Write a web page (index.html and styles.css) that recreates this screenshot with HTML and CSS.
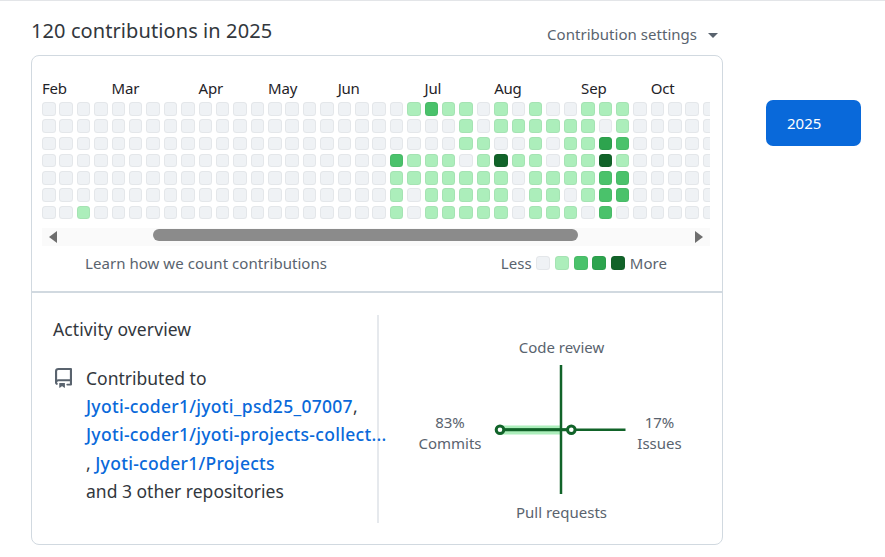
FILE: index.html
```html
<!DOCTYPE html>
<html lang="en">
<head>
    <meta charset="UTF-8">
    <meta name="viewport" content="width=device-width, initial-scale=1.0">
    <title>Contributions</title>
    <link rel="stylesheet" href="styles.css">
</head>
<body>
    <div class="page">
        <div class="main">
            <div class="top-row">
                <h2 class="title">120 contributions in 2025</h2>
                <div class="settings">Contribution settings <span class="caret"></span></div>
            </div>
            <div class="card">
                <div class="graph">
                    <div class="calendar">
                        <div class="months" id="months"></div>
                        <div class="cells" id="cells"></div>
                        <div class="scrollbar">
                            <span class="arrow arrow-left"></span>
                            <span class="thumb"></span>
                            <span class="arrow arrow-right"></span>
                        </div>
                    </div>
                    <div class="legend-row">
                        <a class="learn">Learn how we count contributions</a>
                        <div class="legend">
                            <span>Less</span>
                            <i class="cell l0"></i>
                            <i class="cell l1"></i>
                            <i class="cell l2"></i>
                            <i class="cell l3"></i>
                            <i class="cell l4"></i>
                            <span>More</span>
                        </div>
                    </div>
                </div>
                <div class="overview">
                    <div class="activity">
                        <h3 class="activity-title">Activity overview</h3>
                        <div class="contributed">
                            <svg class="repo-icon" viewBox="2 0 12 16" preserveAspectRatio="none">
                                <path d="M2 2.5A2.5 2.5 0 0 1 4.5 0h8.75a.75.75 0 0 1 .75.75v12.5a.75.75 0 0 1-.75.75h-2.5a.75.75 0 0 1 0-1.5h1.75v-2h-8a1 1 0 0 0-.714 1.7.75.75 0 1 1-1.072 1.05A2.495 2.495 0 0 1 2 11.5Zm10.5-1h-8a1 1 0 0 0-1 1v6.708A2.486 2.486 0 0 1 4.5 9h8ZM5 12.25a.25.25 0 0 1 .25-.25h3.5a.25.25 0 0 1 .25.25v3.25a.25.25 0 0 1-.4.2l-1.45-1.087a.25.25 0 0 0-.3 0L5.4 15.7a.25.25 0 0 1-.4-.2Z"></path>
                            </svg>
                            <div class="repos">
                                <div>Contributed to</div>
                                <div><a>Jyoti-coder1/jyoti_psd25_07007</a>,</div>
                                <div class="nowrap"><a>Jyoti-coder1/jyoti-projects-collect...</a></div>
                                <div>, <a>Jyoti-coder1/Projects</a></div>
                                <div>and 3 other repositories</div>
                            </div>
                        </div>
                    </div>
                    <div class="radar">
                        <svg width="344" height="208" viewBox="378.5 315 344 208">
                            <text class="radar-label" x="561" y="353" text-anchor="middle">Code review</text>
                            <text class="radar-label" x="449.5" y="428" text-anchor="middle">83%</text>
                            <text class="radar-label" x="449.5" y="449" text-anchor="middle">Commits</text>
                            <text class="radar-label" x="659" y="428" text-anchor="middle">17%</text>
                            <text class="radar-label" x="659" y="449" text-anchor="middle">Issues</text>
                            <text class="radar-label" x="561" y="518" text-anchor="middle">Pull requests</text>
                            <rect class="radar-area" x="499" y="425.5" width="62" height="9"></rect>
                            <line class="radar-axis" x1="560.5" y1="365" x2="560.5" y2="494"></line>
                            <line class="radar-axis" x1="499" y1="429.8" x2="625" y2="429.8"></line>
                            <line class="radar-value" x1="499" y1="429.8" x2="571" y2="429.8"></line>
                            <circle class="radar-dot" cx="499.5" cy="429.8" r="3.8"></circle>
                            <circle class="radar-dot" cx="570.8" cy="429.8" r="3.8"></circle>
                        </svg>
                    </div>
                </div>
            </div>
        </div>
        <div class="side">
            <button class="year">2025</button>
        </div>
    </div>
    <script src="script.js"></script>
</body>
</html>
```

FILE: styles.css
```css
* {
    box-sizing: border-box;
}
body {
    margin: 0;
    font-family: "Noto Sans", Arial, sans-serif;
    background: white;
    color: #1f2328;
}
.page {
    display: flex;
    height: 557px;
    border-top: 1px solid #e3e5e8;
    overflow: hidden;
}
.main {
    width: 692px;
    margin-left: 31px;
}
.top-row {
    display: flex;
    justify-content: space-between;
    align-items: center;
    height: 54px;
    padding-top: 4px;
}
.title {
    margin: 0;
    font-size: 20px;
    font-weight: 400;
    letter-spacing: 0.09px;
    color: #32373d;
}
.settings {
    margin: 8px 5px 0 0;
    font-size: 15px;
    color: #59636e;
    letter-spacing: 0.03px;
}
.caret {
    display: inline-block;
    margin-left: 7px;
    vertical-align: middle;
    border-top: 5px solid #59636e;
    border-left: 5px solid transparent;
    border-right: 5px solid transparent;
}
.card {
    height: 490px;
    border: 1px solid #d1d9e0;
    border-radius: 8px;
}
.graph {
    height: 237px;
    padding: 22px 11px 0 10px;
    border-bottom: 2px solid #d1d9e0;
}
.calendar {
    width: 668px;
    overflow: hidden;
}
.months {
    display: grid;
    grid-template-columns: repeat(39, 17.4px);
    height: 24px;
    font-size: 15px;
    line-height: 20px;
    letter-spacing: -0.2px;
}
.months span {
    white-space: nowrap;
}
.cells {
    display: grid;
    grid-template-columns: repeat(39, 13.5px);
    grid-template-rows: repeat(7, 13.5px);
    grid-auto-flow: column;
    gap: 3.8px 3.9px;
}
.cell {
    display: block;
    width: 13.5px;
    height: 13.5px;
    border-radius: 3.5px;
    border: 1px solid rgba(31, 35, 40, 0.05);
}
.l0 { background: #eff2f5; }
.l1 { background: #aceebb; }
.l2 { background: #4ac26b; }
.l3 { background: #2da44e; }
.l4 { background: #116329; }
.scrollbar {
    position: relative;
    display: flex;
    align-items: center;
    justify-content: space-between;
    height: 18px;
    margin-top: 9px;
    padding: 0 7px;
    background: #fafafa;
}
.thumb {
    position: absolute;
    top: 1px;
    left: 111px;
    width: 425px;
    height: 12px;
    border-radius: 6px;
    background: #8b8b8b;
}
.arrow {
    border-top: 6.5px solid transparent;
    border-bottom: 6.5px solid transparent;
}
.arrow-left {
    border-right: 8px solid #6e6e6e;
}
.arrow-right {
    border-left: 8px solid #6e6e6e;
}
.legend-row {
    display: flex;
    justify-content: space-between;
    align-items: center;
    height: 34px;
    padding: 0 44px 0 43px;
    font-size: 15px;
    color: #59636e;
    letter-spacing: 0.05px;
}
.legend {
    display: flex;
    align-items: center;
    gap: 4.7px;
}
.legend .cell {
    width: 14px;
    height: 14px;
}
.overview {
    display: flex;
    padding-top: 22px;
}
.activity {
    width: 346.5px;
    height: 208px;
    padding-left: 21px;
    border-right: 2px solid #e6e9ed;
}
.activity-title {
    margin: 0 0 21px;
    font-size: 17.5px;
    line-height: 28px;
    font-weight: 400;
    letter-spacing: 0.1px;
    color: #32373d;
}
.contributed {
    display: flex;
    gap: 14px;
}
.repo-icon {
    flex: none;
    width: 17px;
    height: 20px;
    margin: 4px 0 0 2px;
    fill: #59636e;
}
.repos {
    font-size: 17.5px;
    line-height: 28.2px;
    color: #32373d;
}
.repos a {
    color: #0969da;
    font-weight: 500;
    letter-spacing: 0.3px;
}
.nowrap {
    white-space: nowrap;
}
.radar-label {
    font-size: 15px;
    fill: #59636e;
}
.radar-area {
    fill: #aceebb;
}
.radar-axis {
    stroke: #116329;
    stroke-width: 2.5;
}
.radar-value {
    stroke: #116329;
    stroke-width: 3;
}
.radar-dot {
    fill: white;
    stroke: #116329;
    stroke-width: 3;
}
.side {
    padding: 99px 0 0 43px;
}
.year {
    display: block;
    width: 94.5px;
    height: 46px;
    padding: 0 0 0 21px;
    border: none;
    border-radius: 7px;
    background: #0969da;
    color: white;
    font-family: inherit;
    font-size: 15px;
    text-align: left;
}
```

FILE: script.js
```js
// one digit per week column, activity only starts in column 19
const empty = "0000000000000000000";
const tail = "00000";
const rows = [
    empty + "001211010100111" + tail,
    empty + "000001011111101" + tail,
    empty + "000001100101132" + tail,
    empty + "021110141101141" + tail,
    empty + "011111110111122" + tail,
    empty + "010111110110122" + tail,
    "0010000000000000000" + "010111110111020" + tail
];

const months = [
    ["Feb", 0], ["Mar", 4], ["Apr", 9], ["May", 13], ["Jun", 17],
    ["Jul", 22], ["Aug", 26], ["Sep", 31], ["Oct", 35]
];

const monthRow = document.getElementById("months");
months.forEach(function (m) {
    const label = document.createElement("span");
    label.textContent = m[0];
    label.style.gridColumn = (m[1] + 1) + " / span 4";
    monthRow.appendChild(label);
});

const cells = document.getElementById("cells");
for (let col = 0; col < 39; col++) {
    for (let row = 0; row < 7; row++) {
        const cell = document.createElement("span");
        cell.className = "cell l" + rows[row][col];
        cells.appendChild(cell);
    }
}
```
